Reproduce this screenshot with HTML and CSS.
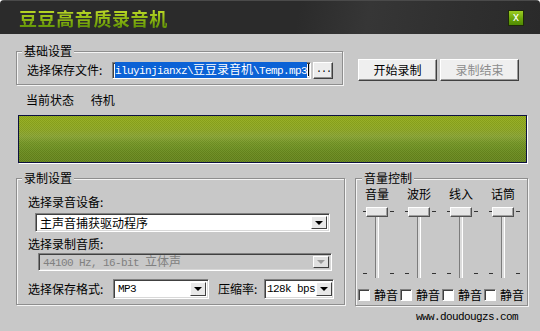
FILE: index.html
```html
<!DOCTYPE html>
<html lang="zh-CN">
<head>
  <meta charset="UTF-8">
  <title>豆豆高音质录音机</title>
  <link rel="stylesheet" href="styles.css">
</head>
<body>

  <div class="window">
    <div class="titlebar">
      <span class="app-title">豆豆高音质录音机</span>
      <span class="close-btn">x</span>
    </div>

    <div class="main">
      <div class="top-row">
        <fieldset class="group group-base">
          <legend>基础设置</legend>
          <div class="file-row">
            <span class="file-label">选择保存文件:</span>
            <div class="path-box">
              <span class="path-sel">iluyinjianxz\<span class="cjk">豆豆录音机</span>\Temp.mp3</span>
              <span class="caret"></span>
            </div>
            <button class="btn-browse">...</button>
          </div>
        </fieldset>

        <div class="actions">
          <button class="btn">开始录制</button>
          <button class="btn" disabled>录制结束</button>
        </div>
      </div>

      <div class="status">
        <span>当前状态</span>
        <span class="status-value">待机</span>
      </div>

      <div class="meter"></div>

      <div class="bottom-row">
        <fieldset class="group group-record">
          <legend>录制设置</legend>
          <div class="field-label">选择录音设备:</div>
          <div class="combo combo-device">
            <span class="combo-text">主声音捕获驱动程序</span>
            <span class="combo-arrow"></span>
          </div>
          <div class="field-label label-quality">选择录制音质:</div>
          <div class="combo combo-quality disabled">
            <span class="combo-text mono">44100 Hz, 16-bit <span class="cjk">立体声</span></span>
            <span class="combo-arrow"></span>
          </div>
          <div class="format-row">
            <span class="format-label">选择保存格式:</span>
            <div class="combo combo-format">
              <span class="combo-text mono">MP3</span>
              <span class="combo-arrow"></span>
            </div>
            <span class="rate-label">压缩率:</span>
            <div class="combo combo-rate">
              <span class="combo-text mono">128k bps</span>
              <span class="combo-arrow"></span>
            </div>
          </div>
        </fieldset>

        <fieldset class="group group-volume">
          <legend>音量控制</legend>
          <div class="mixer">
            <div class="channel">
              <div class="channel-name">音量</div>
              <div class="slider">
                <span class="tick tl"></span><span class="tick tr"></span>
                <span class="tick bl"></span><span class="tick br"></span>
                <span class="track"></span>
                <span class="thumb"></span>
              </div>
              <label class="mute"><span class="checkbox"></span>静音</label>
            </div>
            <div class="channel">
              <div class="channel-name">波形</div>
              <div class="slider">
                <span class="tick tl"></span><span class="tick tr"></span>
                <span class="tick bl"></span><span class="tick br"></span>
                <span class="track"></span>
                <span class="thumb"></span>
              </div>
              <label class="mute"><span class="checkbox"></span>静音</label>
            </div>
            <div class="channel">
              <div class="channel-name">线入</div>
              <div class="slider">
                <span class="tick tl"></span><span class="tick tr"></span>
                <span class="tick bl"></span><span class="tick br"></span>
                <span class="track"></span>
                <span class="thumb"></span>
              </div>
              <label class="mute"><span class="checkbox"></span>静音</label>
            </div>
            <div class="channel">
              <div class="channel-name">话筒</div>
              <div class="slider">
                <span class="tick tl"></span><span class="tick tr"></span>
                <span class="tick bl"></span><span class="tick br"></span>
                <span class="track"></span>
                <span class="thumb"></span>
              </div>
              <label class="mute"><span class="checkbox"></span>静音</label>
            </div>
          </div>
        </fieldset>
      </div>

      <div class="site">www.doudougzs.com</div>
    </div>
  </div>

</body>
</html>
```

FILE: styles.css
```css
* {
  box-sizing: border-box;
}

html, body {
  margin: 0;
  background-color: #ffffff;
}

body {
  font: 12px/14px "Noto Sans CJK SC", "Liberation Sans", sans-serif;
  color: #000;
}

.window {
  width: 540px;
  height: 331px;
  background-color: #c8c8c8;
  border-radius: 4px 4px 0 0;
  overflow: hidden;
}

/* title bar */

.titlebar {
  height: 34px;
  display: flex;
  align-items: center;
  justify-content: space-between;
  padding: 0 16px 0 19px;
  border-top: 1px solid #4a4a4a;
  background: linear-gradient(100deg, #2b2b2b 55%, #363636 68%, #2f2f2f 85%, #2a2a2a);
}

.app-title {
  font-size: 18px;
  line-height: 20px;
  font-weight: 700;
  letter-spacing: 0.6px;
  background: linear-gradient(#c8e030, #94bc14 50%, #5e9206);
  -webkit-background-clip: text;
  background-clip: text;
  color: transparent;
}

.close-btn {
  width: 16px;
  height: 16px;
  border: 1px solid #1e2a0a;
  background: linear-gradient(#9ccc22, #6aa40a 55%, #4f8a02);
  color: #fff;
  font: 12px/13px "Liberation Sans", sans-serif;
  text-align: center;
}

/* content */

.main {
  padding: 10px 12px 0 16px;
}

.group {
  margin: 0;
  border: 1px solid #8e8e8e;
  box-shadow: 1px 1px 0 #f4f4f4, inset 1px 1px 0 #f4f4f4;
}

.group legend {
  padding: 0 2px;
  background-color: #c8c8c8;
}

.top-row {
  display: flex;
  align-items: flex-start;
}

.group-base {
  width: 327px;
  padding: 4px 9px 6px 10px;
}

.group-base legend {
  margin-left: -5px;
}

.file-row {
  display: flex;
  align-items: center;
  height: 16px;
}

.file-label {
  width: 85px;
}

.path-box {
  width: 199px;
  height: 17px;
  display: flex;
  justify-content: flex-end;
  align-items: center;
  padding: 0 1px;
  background-color: #fff;
  border: 1px solid;
  border-color: #808080 #fff #fff #808080;
  box-shadow: inset 1px 1px 0 #404040, inset -1px -1px 0 #d8d8d8;
}

.path-sel {
  flex-shrink: 0;
  white-space: nowrap;
  background-color: #0b62d6;
  color: #fff;
  font: 11px/13px "Liberation Mono", monospace;
  letter-spacing: -0.6px;
}

.cjk {
  font-family: "Noto Sans CJK SC", sans-serif;
  font-size: 12px;
  letter-spacing: 0;
}

.caret {
  flex-shrink: 0;
  width: 1px;
  height: 12px;
  margin-left: 1px;
  background-color: #000;
}

.btn-browse {
  width: 20px;
  height: 17px;
  margin-left: 2px;
  padding: 0 0 0 1px;
  font: 10px/10px "Liberation Mono", monospace;
  letter-spacing: -1px;
  text-align: center;
  background-color: #ececec;
  border: 1px solid;
  border-color: #fff #404040 #404040 #fff;
  box-shadow: inset -1px -1px 0 #909090;
}

.actions {
  display: flex;
  gap: 3px;
  margin: 15px 0 0 15px;
}

.btn {
  width: 79px;
  height: 22px;
  padding: 0;
  font: 12px/14px "Noto Sans CJK SC", sans-serif;
  color: #000;
  background-color: #efefef;
  border: 1px solid;
  border-color: #fff #404040 #404040 #fff;
  box-shadow: inset -1px -1px 0 #9a9a9a;
}

.btn:disabled {
  color: #8c8c8c;
}

.status {
  margin: 8px 0 0 10px;
  height: 14px;
}

.status-value {
  margin-left: 14px;
}

.meter {
  height: 48px;
  margin: 8px 1px 0 2px;
  border: 1px solid #0c1040;
  box-shadow: 1px 1px 0 #fff;
  background:
    repeating-conic-gradient(rgba(0, 0, 0, 0.07) 0 25%, rgba(255, 255, 255, 0.05) 0 50%) 0 0 / 2px 2px,
    linear-gradient(#93ad18, #8ea824 30%, #8aa534 45%, #769826 58%, #6a8b1e 80%, #66861c);
}

.bottom-row {
  display: flex;
  align-items: flex-start;
  margin-top: 8px;
}

/* record settings */

.group-record {
  width: 327px;
  padding: 10px 10px 5px 11px;
}

.group-record legend {
  margin-left: -6px;
}

.label-quality {
  margin-top: 5px;
}

.combo {
  display: flex;
  align-items: center;
  background-color: #fff;
  border: 1px solid;
  border-color: #808080 #fff #fff #808080;
  box-shadow: inset 1px 1px 0 #404040, inset -1px -1px 0 #d8d8d8;
  padding: 2px;
}

.combo-text {
  flex: 1;
  padding-left: 2px;
  white-space: nowrap;
  line-height: 13px;
}

.mono {
  font: 11px/13px "Liberation Mono", monospace;
  letter-spacing: -0.6px;
}

.combo-arrow {
  width: 16px;
  flex-shrink: 0;
  align-self: stretch;
  display: flex;
  align-items: center;
  justify-content: center;
  background-color: #e8e8e8;
  border: 1px solid;
  border-color: #fff #404040 #404040 #fff;
}

.combo-arrow::after {
  content: "";
  border-left: 4px solid transparent;
  border-right: 4px solid transparent;
  border-top: 4px solid #000;
}

.combo-device {
  width: 295px;
  height: 19px;
  margin: 4px 0 0 7px;
}

.combo-quality {
  width: 294px;
  height: 18px;
  margin: 2px 0 0 10px;
}

.combo.disabled {
  background-color: #c8c8c8;
  color: #808080;
}

.combo.disabled .combo-arrow {
  background-color: #e0e0e0;
}

.combo.disabled .combo-arrow::after {
  border-top-color: #9a9a9a;
}

.format-row {
  display: flex;
  align-items: center;
  height: 20px;
  margin-top: 8px;
}

.format-label {
  width: 85px;
}

.combo-format {
  width: 96px;
  height: 20px;
}

.rate-label {
  margin-left: 9px;
  width: 46px;
}

.combo-rate {
  width: 70px;
  height: 20px;
  padding: 2px 1px;
}

.combo-rate .combo-text {
  padding-left: 1px;
}

/* volume control */

.group-volume {
  width: 175px;
  margin-left: 10px;
  padding: 2px 0 3px 0;
}

.group-volume legend {
  margin-left: 6px;
}

.mixer {
  display: grid;
  grid-template-columns: repeat(4, 42px);
}

.channel-name {
  text-align: center;
  height: 14px;
}

.slider {
  position: relative;
  height: 72px;
  margin-top: 6px;
  display: flex;
  justify-content: center;
}

.track {
  width: 4px;
  height: 62px;
  margin-top: 9px;
  border-left: 1px solid #7c7c7c;
  border-right: 1px solid #fff;
  background-color: #dcdcdc;
}

.thumb {
  position: absolute;
  top: 0;
  left: 10px;
  width: 22px;
  height: 10px;
  background-color: #e6e6e6;
  border: 1px solid;
  border-color: #fff #505050 #505050 #fff;
  box-shadow: inset -1px -1px 0 #a0a0a0;
}

.tick {
  position: absolute;
  width: 4px;
  height: 1px;
  background-color: #333;
}

.tick.tl { top: 4px; left: 7px; }
.tick.tr { top: 4px; left: 34px; }
.tick.bl { top: 66px; left: 7px; }
.tick.br { top: 66px; left: 34px; }

.mute {
  display: flex;
  align-items: center;
  gap: 4px;
  margin: 9px 0 0 2px;
  height: 14px;
}

.checkbox {
  width: 12px;
  height: 12px;
  background-color: #fff;
  border: 1px solid;
  border-color: #808080 #fff #fff #808080;
  box-shadow: inset 1px 1px 0 #404040;
}

.site {
  text-align: right;
  margin: 5px 10px 0 0;
  font: 11px/12px "Liberation Mono", monospace;
  letter-spacing: -0.6px;
}
```
